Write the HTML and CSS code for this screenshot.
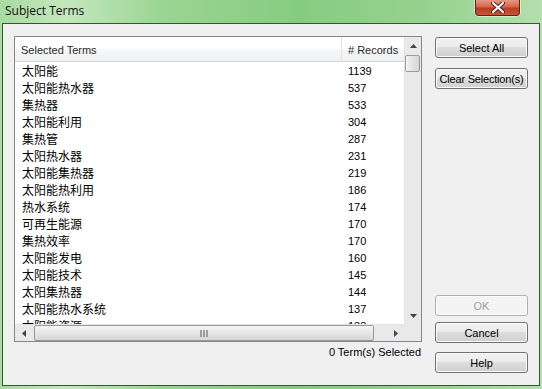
FILE: index.html
```html
<!DOCTYPE html>
<html>
<head>
  <link rel="stylesheet" href="styles.css">
</head>
<body>
  <div class="window">
    <div class="titlebar">
      <div class="title">Subject Terms</div>
      <div class="close-btn">
        <svg width="14" height="11" viewBox="0 0 14 11">
          <path d="M2 1 L12 10 M12 1 L2 10" stroke="#4a2a22" stroke-width="4" stroke-linecap="round"/>
          <path d="M2 1 L12 10 M12 1 L2 10" stroke="#ffffff" stroke-width="2" stroke-linecap="round"/>
        </svg>
      </div>
    </div>

    <div class="client">
      <div class="left-col">
        <div class="listbox">
          <div class="list-view">
            <div class="list-header">
              <div class="col-term">Selected Terms</div>
              <div class="col-count">
                <span># Records</span>
              </div>
            </div>
            <div class="list-rows" id="rows"></div>
          </div>

          <!-- vertical scrollbar -->
          <div class="vscroll">
            <div class="arrow-box">
              <svg width="7" height="4" viewBox="0 0 7 4"><path d="M0 4 L3.5 0 L7 4 Z" fill="#444"/></svg>
            </div>
            <div class="vtrack">
              <div class="vthumb"></div>
            </div>
            <div class="arrow-box">
              <svg width="7" height="4" viewBox="0 0 7 4"><path d="M0 0 L3.5 4 L7 0 Z" fill="#444"/></svg>
            </div>
          </div>

          <!-- horizontal scrollbar -->
          <div class="hscroll">
            <div class="arrow-box h">
              <svg width="4" height="7" viewBox="0 0 4 7"><path d="M4 0 L0 3.5 L4 7 Z" fill="#444"/></svg>
            </div>
            <div class="htrack">
              <div class="hthumb">
                <svg width="8" height="7" viewBox="0 0 8 7">
                  <path d="M1 0 V7 M4 0 V7 M7 0 V7" stroke="#555" stroke-width="1"/>
                </svg>
              </div>
            </div>
            <div class="arrow-box h">
              <svg width="4" height="7" viewBox="0 0 4 7"><path d="M0 0 L4 3.5 L0 7 Z" fill="#444"/></svg>
            </div>
          </div>
          <div class="corner"></div>
        </div>
        <div class="status">0 Term(s) Selected</div>
      </div>

      <div class="button-col">
        <div class="btn">Select All</div>
        <div class="btn btn-clear">Clear Selection(s)</div>
        <div class="spacer"></div>
        <div class="btn disabled">OK</div>
        <div class="btn btn-cancel">Cancel</div>
        <div class="btn btn-help">Help</div>
      </div>
    </div>
  </div>

  <script>
    const terms = [
      ['太阳能', 1139], ['太阳能热水器', 537], ['集热器', 533], ['太阳能利用', 304],
      ['集热管', 287], ['太阳热水器', 231], ['太阳能集热器', 219], ['太阳能热利用', 186],
      ['热水系统', 174], ['可再生能源', 170], ['集热效率', 170], ['太阳能发电', 160],
      ['太阳能技术', 145], ['太阳集热器', 144], ['太阳能热水系统', 137], ['太阳能资源', 133]
    ];
    let html = '';
    for (const [name, count] of terms) {
      html += `<div class="row"><div class="col-term">${name}</div><div class="col-count">${count}</div></div>`;
    }
    document.getElementById('rows').innerHTML = html;
  </script>
</body>
</html>
```

FILE: styles.css
```css
* {
  box-sizing: border-box;
}

body {
  margin: 0;
  width: 542px;
  height: 389px;
  overflow: hidden;
  font-family: 'Liberation Sans', Arial, sans-serif;
  font-size: 11px;
  color: #000;
  background: #8ccc86;
}

.window {
  width: 542px;
  height: 389px;
  display: flex;
  flex-direction: column;
  padding: 0 2px 3px 2px;
  background: linear-gradient(90deg, #a8dba1 0%, #c4e7bd 12%, #9ad593 30%, #86cc80 55%, #97d391 80%, #b3e0ac 100%);
}

.titlebar {
  height: 23px;
  flex-shrink: 0;
  position: relative;
  display: flex;
  align-items: center;
}

.title {
  padding-left: 3px;
  padding-bottom: 2px;
  font-family: 'Open Sans', 'Liberation Sans', sans-serif;
  font-size: 12px;
  color: #111;
}

.close-btn {
  position: absolute;
  top: 0;
  left: 473px;
  width: 45px;
  height: 16px;
  border: 1px solid #5a2418;
  border-top: none;
  border-radius: 0 0 4px 4px;
  background: linear-gradient(#e49a85 0%, #d5664b 45%, #bb3c1e 55%, #c8553a 100%);
  display: flex;
  align-items: center;
  justify-content: center;
  box-shadow: 0 0 0 1px rgba(255, 255, 255, 0.5);
}

.client {
  flex: 1;
  display: flex;
  background: #f0f0f0;
  border: 1px solid #2f5b2c;
  padding: 12px 0 0 11px;
}

.left-col {
  width: 408px;
  display: flex;
  flex-direction: column;
}

.listbox {
  height: 306px;
  border: 1px solid #828790;
  background: #fff;
  display: grid;
  grid-template-columns: 1fr 17px;
  grid-template-rows: 1fr 17px;
}

.list-view {
  overflow: hidden;
}

.list-header {
  height: 25px;
  display: flex;
  background: linear-gradient(#ffffff 0%, #ffffff 45%, #f5f6f7 55%, #eef0f2 100%);
  border-bottom: 1px solid #d5d5d5;
}

.list-header .col-term,
.list-header .col-count {
  display: flex;
  align-items: center;
  color: #2a2a2a;
  padding-top: 1px;
}

.list-header .col-count {
  border-left: 1px solid #e3e5e7;
}

.col-term {
  width: 326px;
  padding-left: 6px;
}

.col-count {
  flex: 1;
  padding-left: 6px;
}

.row {
  height: 17px;
  display: flex;
  align-items: center;
}

.row .col-term {
  font-family: 'Noto Sans CJK SC', sans-serif;
  font-size: 12px;
  padding-left: 7px;
}

.row .col-count {
  padding-left: 7px;
}

.vscroll {
  background: #e9e9e9;
  border-left: 1px solid #e3e3e3;
  display: flex;
  flex-direction: column;
}

.arrow-box {
  height: 17px;
  display: flex;
  align-items: center;
  justify-content: center;
  flex-shrink: 0;
}

.arrow-box.h {
  width: 17px;
  height: auto;
}

.vtrack {
  flex: 1;
  padding: 1px 1px 0 0;
}

.vthumb {
  height: 17px;
  border: 1px solid #9a9a9a;
  border-radius: 2px;
  background: linear-gradient(90deg, #f4f4f4, #e2e2e2 50%, #d8d8d8);
}

.hscroll {
  background: #e9e9e9;
  border-top: 1px solid #e3e3e3;
  display: flex;
}

.htrack {
  flex: 1;
  padding: 0 13px 0 2px;
}

.hthumb {
  height: 16px;
  border: 1px solid #9a9a9a;
  border-radius: 2px;
  background: linear-gradient(#f5f5f5, #e6e6e6 50%, #d6d6d6);
  display: flex;
  align-items: center;
  justify-content: center;
}

.corner {
  background: #e9e9e9;
}

.status {
  text-align: right;
  padding-top: 4px;
  padding-right: 1px;
}

.button-col {
  width: 93px;
  margin-left: 13px;
  padding-top: 1px;
  padding-bottom: 12px;
  display: flex;
  flex-direction: column;
}

.spacer {
  flex: 1;
}

.btn {
  height: 21px;
  border: 1px solid #707070;
  border-radius: 3px;
  background: linear-gradient(#f2f2f2 0%, #ebebeb 45%, #dddddd 50%, #cfcfcf 100%);
  display: flex;
  align-items: center;
  justify-content: center;
  box-shadow: inset 0 0 0 1px #fcfcfc;
}

.btn-clear {
  margin-top: 10px;
  letter-spacing: -0.2px;
}

.btn.disabled {
  color: #a0a0a0;
  border-color: #adb2b5;
  background: #f4f4f4;
}

.btn-cancel {
  margin-top: 6px;
}

.btn-help {
  margin-top: 9px;
}
```
